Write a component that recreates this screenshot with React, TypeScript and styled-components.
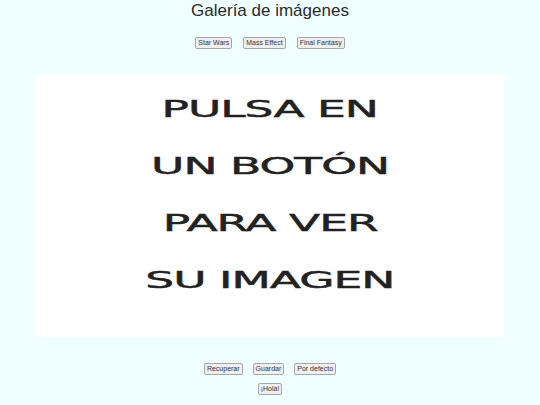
import React from 'react';
import styled, { createGlobalStyle } from 'styled-components';

const GlobalStyle = createGlobalStyle`
  html, body {
    margin: 0;
    padding: 0;
    background-color: #f0ffff;
  }
  body {
    font-family: "Liberation Sans", Arial, sans-serif;
  }
`;

const Page = styled.div`
  display: flex;
  flex-direction: column;
  align-items: center;
  width: 540px;
  height: 405px;
`;

const Title = styled.h1`
  margin: 0;
  padding-top: 1px;
  font-size: 17px;
  line-height: 20px;
  font-weight: normal;
  color: #2a2a2a;
`;

const ButtonRow = styled.div<{ $gap: number; $top: number }>`
  display: flex;
  justify-content: center;
  gap: ${props => props.$gap}px;
  margin-top: ${props => props.$top}px;
`;

const SmallButton = styled.button`
  font-family: "Liberation Sans", Arial, sans-serif;
  font-size: 7px;
  line-height: 10px;
  height: 12px;
  padding: 0 2px;
  color: #333;
  background-color: #efefef;
  border: 1px solid #a6a6a6;
  border-radius: 2px;
  cursor: pointer;
`;

const ImagePanel = styled.div`
  box-sizing: border-box;
  width: 468px;
  height: 263px;
  margin-top: 25px;
  padding-top: 7px;
  background-color: #fff;
  display: flex;
  flex-direction: column;
  align-items: center;
`;

/* wide display lettering: DejaVu stretched sideways, stroke thickened a touch */
const PlaceholderLine = styled.span`
  display: inline-block;
  font-family: "DejaVu Sans", sans-serif;
  font-weight: normal;
  font-size: 23px;
  line-height: 57px;
  letter-spacing: -0.5px;
  color: #222;
  -webkit-text-stroke: 0.45px #222;
  transform: scaleX(1.98);
  transform-origin: center;
  white-space: nowrap;
`;

const galleries = ['Star Wars', 'Mass Effect', 'Final Fantasy'];
const storage = ['Recuperar', 'Guardar', 'Por defecto'];
const placeholder = ['PULSA EN', 'UN BOTÓN', 'PARA VER', 'SU IMAGEN'];

const App = () => {
  return (
    <>
      <GlobalStyle />
      <Page>
        <Title>Galería de imágenes</Title>

        <ButtonRow $gap={11} $top={16}>
          {galleries.map(name => (
            <SmallButton key={name}>{name}</SmallButton>
          ))}
        </ButtonRow>

        <ImagePanel>
          {placeholder.map(line => (
            <PlaceholderLine key={line}>{line}</PlaceholderLine>
          ))}
        </ImagePanel>

        <ButtonRow $gap={10} $top={26}>
          {storage.map(name => (
            <SmallButton key={name}>{name}</SmallButton>
          ))}
        </ButtonRow>

        <ButtonRow $gap={0} $top={8}>
          <SmallButton>¡Hola!</SmallButton>
        </ButtonRow>
      </Page>
    </>
  );
};

export default App;
